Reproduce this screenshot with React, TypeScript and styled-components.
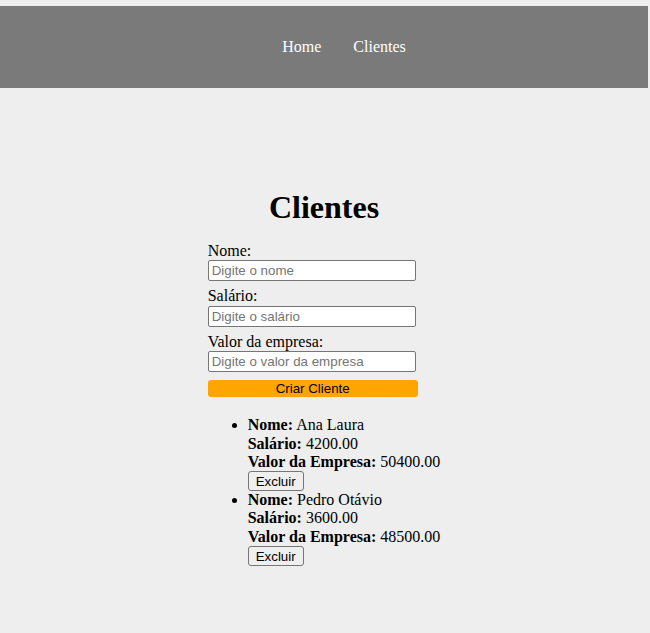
import React from "react";
import styled, { createGlobalStyle } from "styled-components";

const GlobalStyle = createGlobalStyle`
  html, body {
    margin: 0;
    padding: 0;
    background: #eeeeee;
    font-family: "Liberation Serif", "Times New Roman", serif;
    font-size: 16px;
    color: #000;
  }
`;

const Page = styled.div`
  width: 648px;
  padding-top: 6px;
  min-height: 633px;
  box-sizing: border-box;
`;

const Header = styled.header`
  background: #7a7a7a;
  height: 82px;
  display: flex;
  align-items: center;
`;

const NavList = styled.ul`
  list-style: none;
  margin: 0;
  padding: 0 0 0 40px;
  flex: 1;
  display: flex;
  justify-content: center;
  gap: 32px;
`;

const NavLink = styled.a`
  color: #ffffff;
  text-decoration: none;
  font-size: 16px;
`;

const Main = styled.main`
  width: fit-content;
  margin: 0 auto;
  padding-top: 101px;
`;

const Title = styled.h1`
  font-size: 32px;
  font-weight: bold;
  text-align: center;
  margin: 0 0 16px;
`;

const Form = styled.form`
  display: flex;
  flex-direction: column;
  align-items: flex-start;
`;

const Field = styled.div`
  display: flex;
  flex-direction: column;
  align-items: flex-start;
  margin-bottom: 6px;
`;

const Label = styled.label`
  display: block;
  line-height: 18.4px;
`;

const Input = styled.input`
  box-sizing: border-box;
  width: 208px;
  height: 21px;
  padding: 1px 3px;
  border: 1px solid #767676;
  border-radius: 2px;
  background: #ffffff;
  font-family: "Liberation Sans", Arial, sans-serif;
  font-size: 13.333px;
  color: #000;
  &::placeholder {
    color: #757575;
  }
`;

const SubmitButton = styled.button`
  box-sizing: border-box;
  width: 210px;
  height: 17px;
  margin-top: 2px;
  padding: 0 6px;
  border: none;
  border-radius: 3px;
  background: #ffa500;
  color: #000;
  font-family: "Liberation Sans", Arial, sans-serif;
  font-size: 13.333px;
  line-height: 17px;
`;

const List = styled.ul`
  margin: 19px 0 0;
  padding-left: 40px;
  list-style: disc;
`;

const Item = styled.li`
  line-height: 18.4px;
`;

const Line = styled.div`
  line-height: 18.4px;
`;

const ButtonRow = styled.div`
  height: 19.4px;
  display: flex;
  align-items: flex-start;
`;

const DeleteButton = styled.button`
  box-sizing: border-box;
  height: 20px;
  padding: 0 7px;
  margin: 0;
  border: 1px solid #767676;
  border-radius: 3px;
  background: #efefef;
  color: #000;
  font-family: "Liberation Sans", Arial, sans-serif;
  font-size: 13.333px;
  line-height: 17px;
`;

const clientes = [
  { nome: "Ana Laura", salario: "4200.00", valor: "50400.00" },
  { nome: "Pedro Otávio", salario: "3600.00", valor: "48500.00" },
];

export default function App() {
  return (
    <>
      <GlobalStyle />
      <Page>
        <Header>
          <NavList>
            <li>
              <NavLink href="#">Home</NavLink>
            </li>
            <li>
              <NavLink href="#">Clientes</NavLink>
            </li>
          </NavList>
        </Header>
        <Main>
          <Title>Clientes</Title>
          <Form onSubmit={(e) => e.preventDefault()}>
            <Field>
              <Label>Nome:</Label>
              <Input placeholder="Digite o nome" />
            </Field>
            <Field>
              <Label>Salário:</Label>
              <Input placeholder="Digite o salário" />
            </Field>
            <Field>
              <Label>Valor da empresa:</Label>
              <Input placeholder="Digite o valor da empresa" />
            </Field>
            <SubmitButton type="submit">Criar Cliente</SubmitButton>
          </Form>
          <List>
            {clientes.map((c) => (
              <Item key={c.nome}>
                <Line>
                  <strong>Nome:</strong> {c.nome}
                </Line>
                <Line>
                  <strong>Salário:</strong> {c.salario}
                </Line>
                <Line>
                  <strong>Valor da Empresa:</strong> {c.valor}
                </Line>
                <ButtonRow>
                  <DeleteButton type="button">Excluir</DeleteButton>
                </ButtonRow>
              </Item>
            ))}
          </List>
        </Main>
      </Page>
    </>
  );
}
